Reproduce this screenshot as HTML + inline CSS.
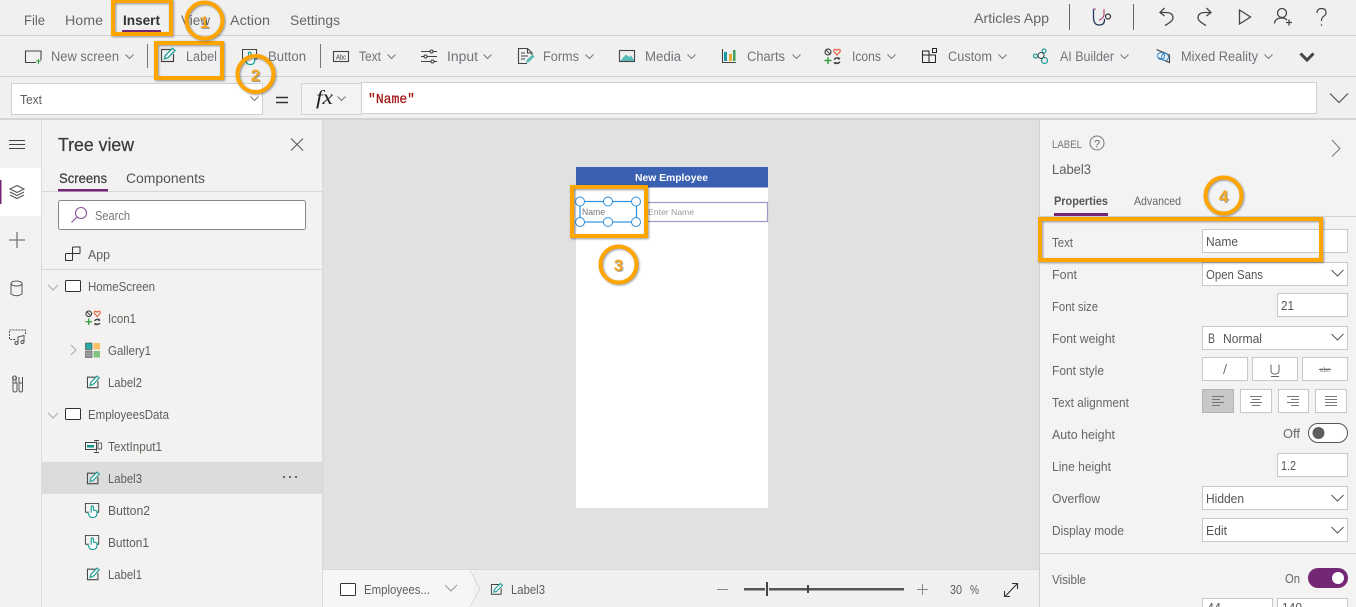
<!DOCTYPE html>
<html><head><meta charset="utf-8"><title>Articles App</title>
<style>
html,body{margin:0;padding:0;background:#f0f0f0;overflow:hidden}
svg{display:block}
text{font-family:"Liberation Sans",sans-serif;font-size:13px;fill:#666;}
.m{font-size:14px;fill:#666}
.t{font-size:13.5px;fill:#72727a}
.n{font-size:13px;fill:#605e5c}
.p{font-size:12.5px;fill:#666}
.v{font-size:12.5px;fill:#555}
.o{fill:none;stroke:#ffa500;stroke-width:4;filter:drop-shadow(1px 1px 1px rgba(0,0,0,.4))}
.num{font-size:17px;font-weight:bold;fill:#f5a623;text-anchor:middle;filter:drop-shadow(1px 1px 0 rgba(0,0,0,.35))}
.i{fill:none;stroke:#444;stroke-width:1.1}
.c{fill:none;stroke:#777;stroke-width:1}
.f{fill:#fff;stroke:#c8c8c8;stroke-width:1}
</style></head>
<body>
<svg width="1356" height="607" viewBox="0 0 1356 607" xmlns="http://www.w3.org/2000/svg">
<defs>
<symbol id="chev" viewBox="0 0 9 5" overflow="visible"><path d="M0.5 .5L4.5 4.5L8.500 .5" fill="none" stroke="#777" stroke-width="1"/></symbol>
<symbol id="label" viewBox="0 0 16 16" overflow="visible">
<path d="M11 2.500H.5V14.500H12.500V7" fill="none" stroke="#444" stroke-width="1.200"/>
<path d="M3.500 11.800L4.300 8.500L11.500 1.300L14 3.500L6.800 10.900Z" fill="#fff" stroke="#2aa198" stroke-width="1.400"/>
</symbol>
<symbol id="btn" viewBox="0 0 17 17" overflow="visible">
<path d="M4.500 10.500H.5V.5H15.500V10.500H14" fill="none" stroke="#444" stroke-width="1.100"/>
<path d="M7 11V4Q8 2.500 9.500 4V8L13.500 9V12.500Q13 16.500 8.500 16.500Q5.500 16.500 4.500 13.500L3 10.500" fill="#fff" stroke="#14a098" stroke-width="1.300"/>
</symbol>
<symbol id="icons" viewBox="0 0 17 17" overflow="visible">
<circle cx="4" cy="4" r="3" fill="none" stroke="#444" stroke-width="1.200"/><path d="M2 2L6 6" stroke="#444"/>
<path d="M13 7L9.800 3.500Q9.500 1.200 11.500 1.300L13 2.300L14.500 1.300Q16.500 1.200 16.200 3.500Z" fill="none" stroke="#e8603c" stroke-width="1.200"/>
<path d="M.5 12.500H7.500M4 9V16" stroke="#2e9e3b" stroke-width="1.400"/>
<path d="M10 11.500Q13 8.500 16 11M16 14Q13 16.500 10 14.500" fill="none" stroke="#444" stroke-width="1.500"/>
<path d="M15 9L16 11.500L13.500 11.500M11 16.500L10 14L12.500 14" fill="#444"/>
</symbol>
<symbol id="scr" viewBox="0 0 16 12" overflow="visible"><rect x=".5" y=".5" width="15" height="11" rx="1" fill="#fff" stroke="#333" stroke-width="1"/></symbol>
</defs>

<rect width="1356" height="607" fill="#f0f0f0"/>
<path d="M0 35.500H1356M0 76.500H1356" stroke="#d2d2d2" stroke-width="1"/>
<rect y="118" width="1356" height="2" fill="#d4d4d4"/>

<!-- menu -->
<text class="m" x="24" y="25" textLength="21" lengthAdjust="spacingAndGlyphs">File</text>
<text class="m" x="65" y="25" textLength="38" lengthAdjust="spacingAndGlyphs">Home</text>
<text class="m" x="123" y="25" textLength="37" lengthAdjust="spacingAndGlyphs" style="font-weight:bold;fill:#333">Insert</text>
<rect x="122" y="30" width="39" height="2" fill="#742774"/>
<text class="m" x="181" y="25" textLength="29" lengthAdjust="spacingAndGlyphs">View</text>
<text class="m" x="230" y="25" textLength="40" lengthAdjust="spacingAndGlyphs">Action</text>
<text class="m" x="290" y="25" textLength="50" lengthAdjust="spacingAndGlyphs">Settings</text>

<text class="m" x="974" y="23" textLength="75" lengthAdjust="spacingAndGlyphs">Articles App</text>
<path d="M1069.500 4V30M1133.500 4V30" stroke="#666" stroke-width="1"/>
<!-- stethoscope -->
<path d="M1093.500 9V17Q1093.500 25 1099 25Q1104.500 25 1104.500 20V19" fill="none" stroke="#243a5e" stroke-width="1.300"/>
<path d="M1093.500 9H1096M1104 9V15Q1103 19 1099 20" fill="none" stroke="#b03a6a" stroke-width="1.100"/>
<circle cx="1108" cy="16.500" r="2.500" fill="none" stroke="#333" stroke-width="1.200"/>
<!-- undo/redo/play/user/help -->
<path d="M1160 12.500H1166Q1173 12.500 1173 18Q1173 21 1165 25.500M1164.500 8L1160 12.500L1164.500 16" class="i" style="stroke-width:1.300"/>
<path d="M1211 12.500H1205Q1198 12.500 1198 18Q1198 21 1206 25.500M1206.500 8L1211 12.500L1206.500 16" class="i" style="stroke-width:1.300"/>
<path d="M1239.500 10V24L1250.500 17Z" class="i" style="stroke-width:1.300"/>
<circle cx="1282" cy="13" r="4.500" class="i" style="stroke-width:1.300"/>
<path d="M1274.500 23.500Q1275 18 1282 18Q1285 18 1287 20M1286 22.500H1292M1289 19.500V25.500" class="i" style="stroke-width:1.300"/>
<path d="M1317 13Q1317 8.500 1321.500 8.500Q1326 8.500 1326 12.500Q1326 15 1323.500 16.500Q1321.500 17.500 1321.500 21" class="i" style="stroke-width:1.200"/><circle cx="1321.500" cy="25" r=".8" fill="#444"/>

<!-- toolbar -->
<path d="M147.500 44V68M320.500 44V68" stroke="#777" stroke-width="1"/>
<path d="M36 62.500H25.500V51H41V60" class="i"/><path d="M36 61H41M38.500 59V64" stroke="#2e9e3b" stroke-width="1"/>
<text class="t" x="51" y="61" textLength="68" lengthAdjust="spacingAndGlyphs">New screen</text><use href="#chev" x="125" y="54" width="9" height="5"/>
<use href="#label" x="161" y="47" width="16" height="16"/>
<text class="t" x="186" y="61" textLength="31" lengthAdjust="spacingAndGlyphs">Label</text>
<use href="#btn" x="242" y="49" width="16" height="16"/>
<text class="t" x="268" y="61" textLength="38" lengthAdjust="spacingAndGlyphs">Button</text>
<rect x="333.500" y="51.500" width="15" height="10" class="i"/><text x="336" y="59.500" style="font-size:7px;fill:#444" textLength="10" lengthAdjust="spacingAndGlyphs">Abc</text>
<text class="t" x="359" y="61" textLength="22" lengthAdjust="spacingAndGlyphs">Text</text><use href="#chev" x="387" y="54" width="9" height="5"/>
<path d="M421 51.500H430M433 51.500H437M421 56.500H424M427 56.500H437M421 61.500H431M434 61.500H437" stroke="#444" stroke-width="1"/><circle cx="431.500" cy="51.500" r="1.500" class="i"/><circle cx="425.500" cy="56.500" r="1.500" class="i"/><circle cx="432.500" cy="61.500" r="1.500" class="i"/>
<text class="t" x="447" y="61" textLength="31" lengthAdjust="spacingAndGlyphs">Input</text><use href="#chev" x="483" y="54" width="9" height="5"/>
<path d="M527 63.500H518.500V48.500H527.500L532 53V55M527.500 48.500V53H532M521 53H525M521 56H528M521 59H525" class="i"/><path d="M526 63L527 59.500L532.500 54.500L534.500 56.500L529 62Z" fill="#5bbdb8"/>
<text class="t" x="543" y="61" textLength="36" lengthAdjust="spacingAndGlyphs">Forms</text><use href="#chev" x="585" y="54" width="9" height="5"/>
<rect x="619.500" y="50.500" width="15" height="11" class="i"/><path d="M620 61L626 54.500L629 57L631 55.500L634 60V61Z" fill="#55bcb8"/>
<text class="t" x="645" y="61" textLength="36" lengthAdjust="spacingAndGlyphs">Media</text><use href="#chev" x="687" y="54" width="9" height="5"/>
<path d="M722.500 49V62.500H736" class="i"/><rect x="724" y="52" width="3" height="9" fill="#1a9ba1"/><rect x="729" y="54" width="3" height="7" fill="#f0a830"/><rect x="733" y="50" width="2.500" height="11" fill="#3ea35a"/>
<text class="t" x="747" y="61" textLength="38" lengthAdjust="spacingAndGlyphs">Charts</text><use href="#chev" x="792" y="54" width="9" height="5"/>
<use href="#icons" x="824" y="48" width="17" height="17"/>
<text class="t" x="852" y="61" textLength="29" lengthAdjust="spacingAndGlyphs">Icons</text><use href="#chev" x="887" y="54" width="9" height="5"/>
<path d="M922.500 55H935.500V62.500H922.500ZM929 55V62.500M922.500 55V51H929V55" fill="none" stroke="#222" stroke-width="1"/><rect x="932.500" y="48.500" width="4" height="4" fill="none" stroke="#222"/>
<text class="t" x="948" y="61" textLength="44" lengthAdjust="spacingAndGlyphs">Custom</text><use href="#chev" x="998" y="54" width="9" height="5"/>
<circle cx="1035.500" cy="56" r="2" fill="none" stroke="#1a9b94" stroke-width="1.200"/><circle cx="1044" cy="51" r="2" fill="none" stroke="#1a9b94" stroke-width="1.200"/><circle cx="1044.500" cy="60.500" r="3" fill="none" stroke="#1a9b94" stroke-width="1.200"/><circle cx="1041" cy="55.500" r="3" fill="none" stroke="#444" stroke-width="1"/>
<text class="t" x="1060" y="61" textLength="54" lengthAdjust="spacingAndGlyphs">AI Builder</text><use href="#chev" x="1120" y="54" width="9" height="5"/>
<path d="M1156.500 49.500L1169.500 55V62.500L1158.500 58" class="i"/><circle cx="1161" cy="56" r="3.500" fill="none" stroke="#2f8fd8"/><circle cx="1165" cy="57" r="3.500" fill="none" stroke="#2f8fd8"/>
<text class="t" x="1181" y="61" textLength="77" lengthAdjust="spacingAndGlyphs">Mixed Reality</text><use href="#chev" x="1264" y="54" width="9" height="5"/>
<path d="M1300.500 53.500L1307 60L1313.500 53.500" fill="none" stroke="#444" stroke-width="3"/>

<!-- formula bar -->
<rect x="11.500" y="83.500" width="251" height="31" fill="#fff" stroke="#d0d0d0"/>
<text class="n" x="20" y="104" textLength="22" lengthAdjust="spacingAndGlyphs">Text</text>
<use href="#chev" x="250" y="96" width="9" height="5"/>
<path d="M276 97.500H288M276 102.500H288" stroke="#333" stroke-width="1.600"/>
<rect x="301.500" y="83.500" width="60" height="31" fill="#f3f3f3" stroke="#d4d4d4"/>
<text x="316" y="104" style="font-family:'Liberation Serif',serif;font-style:italic;font-size:20px;fill:#222" textLength="17" lengthAdjust="spacingAndGlyphs">fx</text>
<use href="#chev" x="337" y="96" width="9" height="5"/>
<rect x="361.500" y="82.500" width="955" height="31" fill="#fff" stroke="#d0d0d0"/>
<text x="368" y="103" style="font-family:'Liberation Mono',monospace;font-size:14px;fill:#a31515;stroke:#a31515;stroke-width:.25" textLength="47" lengthAdjust="spacingAndGlyphs">"Name"</text>
<path d="M1330 93.500L1339 102.500L1348 93.500" fill="none" stroke="#555" stroke-width="1.200"/>

<!-- left rail -->
<rect x="0" y="120" width="322" height="487" fill="#f3f2f1"/>
<rect x="41" y="120" width="1" height="487" fill="#dcdcdc"/>
<rect x="0" y="168" width="41" height="48" fill="#fff"/>
<rect x="0" y="180" width="1.500" height="24" fill="#742774"/>
<path d="M9 140.500H25M9 144.500H25M9 148.500H25" stroke="#444" stroke-width="1"/>
<path d="M17 185.500L24 189L17 192.500L10 189ZM10 192L17 195.500L24 192M10 195L17 198.500L24 195" fill="none" stroke="#555" stroke-width="1.100"/>
<path d="M9 240H25M17 232V248" stroke="#777" stroke-width="1.300"/>
<ellipse cx="16.500" cy="283.500" rx="5.500" ry="2.500" fill="none" stroke="#555"/><path d="M11 283.500V294Q16.500 297.500 22 294V283.500" fill="none" stroke="#555"/>
<path d="M15 339.500H9.500V330H25.500V335" fill="none" stroke="#555" stroke-dasharray="2 1"/><path d="M18 343V337L24 335.500V342" fill="none" stroke="#555"/><circle cx="16.500" cy="343" r="1.500" fill="none" stroke="#555"/><circle cx="22.500" cy="342" r="1.500" fill="none" stroke="#555"/>
<path d="M13 377V390Q13 392 15 392Q17 392 17 390V383H12.500M16 377V383M19 377V390Q19 392 21 392Q22.500 392 22.500 390V377M19 383H22.500" fill="none" stroke="#555" stroke-width="1"/><circle cx="14.500" cy="378" r="2" fill="none" stroke="#555"/>

<!-- tree panel -->
<rect x="322" y="120" width="1" height="487" fill="#d8d8d8"/>
<text x="58" y="151" style="font-size:18px;fill:#3b3a39;stroke:#3b3a39;stroke-width:.25" textLength="76" lengthAdjust="spacingAndGlyphs">Tree view</text>
<path d="M291 138.500L303 150.500M303 138.500L291 150.500" stroke="#555" stroke-width="1"/>
<text x="59" y="183" style="font-size:14px;fill:#3b3a39;stroke:#3b3a39;stroke-width:.2" textLength="48" lengthAdjust="spacingAndGlyphs">Screens</text>
<text x="126" y="183" style="font-size:14px;fill:#555" textLength="79" lengthAdjust="spacingAndGlyphs">Components</text>
<rect x="42" y="191" width="280" height="1" fill="#d8d8d8"/>
<rect x="58" y="189" width="50" height="2.500" fill="#742774"/>
<rect x="58.500" y="200.500" width="247" height="29" rx="2" fill="#fff" stroke="#8a8886"/>
<circle cx="81" cy="213" r="5.500" fill="none" stroke="#8f4e9c" stroke-width="1.100"/><path d="M77 217L71.500 222.500" stroke="#8f4e9c" stroke-width="1.100"/>
<text class="n" x="95" y="220" textLength="35" lengthAdjust="spacingAndGlyphs" style="fill:#777">Search</text>
<path d="M65.500 253.500H80M72.500 247V260.500M65.500 253.500V260.500H72.500M72.500 247H80V253.500" fill="none" stroke="#333"/>
<text class="n" x="88" y="259" textLength="22" lengthAdjust="spacingAndGlyphs">App</text>
<rect x="42" y="269" width="280" height="1" fill="#d8d8d8"/>

<path d="M48 285L53 290L58 285" fill="none" stroke="#aaa"/>
<use href="#scr" x="65" y="280" width="16" height="12"/>
<text class="n" x="88" y="291" textLength="67" lengthAdjust="spacingAndGlyphs">HomeScreen</text>
<use href="#icons" x="85" y="310" width="16" height="16"/>
<text class="n" x="108" y="323" textLength="28" lengthAdjust="spacingAndGlyphs">Icon1</text>
<path d="M71 345L76 350L71 355" fill="none" stroke="#aaa"/>
<rect x="85.500" y="343" width="6.500" height="6.500" fill="#2aa9a5" stroke="#444" stroke-width=".6"/><rect x="93.500" y="343" width="6.500" height="6.500" fill="#f7c064"/><rect x="85.500" y="351" width="6.500" height="6.500" fill="#999" stroke="#555" stroke-width=".6"/><rect x="93.500" y="351" width="6.500" height="6.500" fill="#7fc37f"/>
<text class="n" x="108" y="355" textLength="43" lengthAdjust="spacingAndGlyphs">Gallery1</text>
<use href="#label" x="87" y="375" width="14" height="14"/>
<text class="n" x="108" y="387" textLength="34" lengthAdjust="spacingAndGlyphs">Label2</text>
<path d="M48 413L53 418L58 413" fill="none" stroke="#aaa"/>
<use href="#scr" x="65" y="408" width="16" height="12"/>
<text class="n" x="88" y="419" textLength="81" lengthAdjust="spacingAndGlyphs">EmployeesData</text>
<rect x="85.500" y="442.500" width="11" height="7" fill="none" stroke="#444"/><rect x="87" y="445" width="7" height="2.500" fill="#0f9488"/>
<path d="M96.500 441.500V451.500M94 440.500H99M94 452.500H99" fill="none" stroke="#444" stroke-width=".9"/><rect x="98" y="443" width="3.500" height="6" fill="none" stroke="#444" stroke-width=".8"/>
<text class="n" x="108" y="451" textLength="54" lengthAdjust="spacingAndGlyphs">TextInput1</text>
<rect x="42" y="462" width="280" height="32" fill="#dcdcdc"/>
<use href="#label" x="87" y="471" width="14" height="14"/>
<text class="n" x="108" y="483" textLength="34" lengthAdjust="spacingAndGlyphs">Label3</text>
<circle cx="284" cy="477" r="1" fill="#444"/><circle cx="290" cy="477" r="1" fill="#444"/><circle cx="296" cy="477" r="1" fill="#444"/>
<use href="#btn" x="85" y="503" width="15" height="15"/>
<text class="n" x="108" y="515" textLength="42" lengthAdjust="spacingAndGlyphs">Button2</text>
<use href="#btn" x="85" y="535" width="15" height="15"/>
<text class="n" x="108" y="547" textLength="41" lengthAdjust="spacingAndGlyphs">Button1</text>
<use href="#label" x="87" y="567" width="14" height="14"/>
<text class="n" x="108" y="579" textLength="34" lengthAdjust="spacingAndGlyphs">Label1</text>

<!-- canvas -->
<rect x="323" y="120" width="716" height="450" fill="#e1e1e1"/>
<rect x="576" y="167" width="192" height="341" fill="#fff"/>
<rect x="576" y="167" width="192" height="20.500" fill="#3a60b2"/>
<text x="635" y="181" style="font-size:10px;font-weight:bold;fill:#fff" textLength="73" lengthAdjust="spacingAndGlyphs">New Employee</text>
<rect x="645.500" y="202.500" width="122" height="19" fill="#fff" stroke="#9c9cc4" stroke-width="1.200"/>
<text x="648" y="215" style="font-size:8.500px;fill:#999" textLength="46" lengthAdjust="spacingAndGlyphs">Enter Name</text>
<text x="582" y="215" style="font-size:9.500px;fill:#777" textLength="23" lengthAdjust="spacingAndGlyphs">Name</text>
<rect x="580" y="201.500" width="56.500" height="20.500" fill="none" stroke="#2f8fd8" stroke-width="1.200"/>
<g fill="#fff" stroke="#2f8fd8" stroke-width="1"><circle cx="580" cy="201.500" r="4.500"/><circle cx="608" cy="201.500" r="4.500"/><circle cx="636" cy="201.500" r="4.500"/><circle cx="580" cy="222" r="4.500"/><circle cx="608" cy="222" r="4.500"/><circle cx="636" cy="222" r="4.500"/></g>

<!-- status bar -->
<rect x="323" y="569" width="716" height="38" fill="#f0f0f0"/>
<rect x="323" y="570" width="150" height="37" fill="#f6f6f6"/>
<rect x="323" y="569" width="716" height="1" fill="#d8d8d8"/>
<rect x="340.500" y="583.500" width="15" height="12" rx="1" fill="#fff" stroke="#333"/>
<text class="n" x="364" y="594" textLength="66" lengthAdjust="spacingAndGlyphs">Employees...</text>
<path d="M445 585L451 591L457 585" fill="none" stroke="#999"/>
<path d="M470 570L480 589L470 607" fill="none" stroke="#d8d8d8"/>
<use href="#label" x="491" y="582" width="13" height="14"/>
<text class="n" x="511" y="594" textLength="34" lengthAdjust="spacingAndGlyphs">Label3</text>
<path d="M717 589.500H728M917 589.500H928M922.500 584V595" stroke="#888" stroke-width="1"/>
<rect x="744" y="588" width="160" height="2.500" fill="#555"/>
<rect x="765" y="581" width="4" height="16" fill="#f0f0f0"/><rect x="766" y="582" width="2" height="14" fill="#444"/>
<rect x="807" y="585" width="2" height="8" fill="#444"/>
<text class="n" x="950" y="594" textLength="12" lengthAdjust="spacingAndGlyphs">30</text>
<text class="n" x="970" y="594" textLength="9" lengthAdjust="spacingAndGlyphs">%</text>
<path d="M1005 596.500L1017 584M1012 583.500H1017.500V589M1004.500 591V596.500H1010" fill="none" stroke="#333" stroke-width="1.100"/>

<!-- right panel -->
<rect x="1039" y="120" width="317" height="487" fill="#f3f3f3"/>
<rect x="1039" y="120" width="1" height="487" fill="#cfcfcf"/>
<text x="1052" y="148" style="font-size:11px;fill:#777" textLength="30" lengthAdjust="spacingAndGlyphs">LABEL</text>
<circle cx="1097" cy="143" r="7" fill="none" stroke="#777"/>
<text x="1094" y="147.500" style="font-size:11px;fill:#666">?</text>
<text class="n" x="1052" y="174" textLength="39" lengthAdjust="spacingAndGlyphs" style="font-size:14px">Label3</text>
<path d="M1332 140L1340 148.500L1332 156.500" fill="none" stroke="#777" stroke-width="1"/>
<text x="1054" y="205" style="font-size:12px;font-weight:bold;fill:#555" textLength="54" lengthAdjust="spacingAndGlyphs">Properties</text>
<text x="1134" y="205" style="font-size:12px;fill:#666" textLength="47" lengthAdjust="spacingAndGlyphs">Advanced</text>
<rect x="1040" y="216" width="316" height="1" fill="#d4d4d4"/>
<rect x="1054" y="213" width="54" height="3" fill="#742774"/>

<text class="p" x="1052" y="247" textLength="21" lengthAdjust="spacingAndGlyphs">Text</text>
<text class="p" x="1052" y="279" textLength="25" lengthAdjust="spacingAndGlyphs">Font</text>
<text class="p" x="1052" y="311" textLength="46" lengthAdjust="spacingAndGlyphs">Font size</text>
<text class="p" x="1052" y="343" textLength="63" lengthAdjust="spacingAndGlyphs">Font weight</text>
<text class="p" x="1052" y="375" textLength="52" lengthAdjust="spacingAndGlyphs">Font style</text>
<text class="p" x="1052" y="407" textLength="77" lengthAdjust="spacingAndGlyphs">Text alignment</text>
<text class="p" x="1052" y="439" textLength="63" lengthAdjust="spacingAndGlyphs">Auto height</text>
<text class="p" x="1052" y="471" textLength="59" lengthAdjust="spacingAndGlyphs">Line height</text>
<text class="p" x="1052" y="503" textLength="48" lengthAdjust="spacingAndGlyphs">Overflow</text>
<text class="p" x="1052" y="535" textLength="72" lengthAdjust="spacingAndGlyphs">Display mode</text>
<text class="p" x="1052" y="584" textLength="34" lengthAdjust="spacingAndGlyphs">Visible</text>

<rect class="f" x="1202.500" y="229.500" width="145" height="23"/>
<text class="v" x="1206" y="246" textLength="32" lengthAdjust="spacingAndGlyphs">Name</text>
<rect class="f" x="1202.500" y="262.500" width="145" height="23"/>
<text class="v" x="1206" y="279" textLength="57" lengthAdjust="spacingAndGlyphs">Open Sans</text>
<path d="M1331.500 270L1337.500 276L1343.500 270" fill="none" stroke="#555"/>
<rect class="f" x="1277.500" y="293.500" width="70" height="23"/>
<text class="v" x="1281" y="310" textLength="13" lengthAdjust="spacingAndGlyphs">21</text>
<rect class="f" x="1202.500" y="326.500" width="145" height="23"/>
<text class="v" x="1208" y="343" textLength="7" lengthAdjust="spacingAndGlyphs" style="font-size:14px">B</text>
<text class="v" x="1223" y="343" textLength="39" lengthAdjust="spacingAndGlyphs">Normal</text>
<path d="M1331.500 334L1337.500 340L1343.500 334" fill="none" stroke="#555"/>

<rect class="f" x="1202.500" y="357.500" width="45" height="23"/>
<rect class="f" x="1252.500" y="357.500" width="45" height="23"/>
<rect class="f" x="1302.500" y="357.500" width="45" height="23"/>
<path d="M1226.500 364L1223.500 374" stroke="#666"/>
<path d="M1271 364.500V371Q1271 374 1275 374Q1279 374 1279 371V364.500M1271 376.500H1279" fill="none" stroke="#666"/>
<path d="M1319 369.500H1331" stroke="#666"/><text x="1320" y="372" style="font-size:7px;fill:#888" textLength="10" lengthAdjust="spacingAndGlyphs">abc</text>

<rect x="1202.500" y="389.500" width="31" height="23" fill="#c8c8c8" stroke="#b4b4b4"/>
<rect class="f" x="1240.500" y="389.500" width="31" height="23"/>
<rect class="f" x="1278.500" y="389.500" width="30" height="23"/>
<rect class="f" x="1315.500" y="389.500" width="31" height="23"/>
<path d="M1212 396.500H1224M1212 399.500H1220M1212 402.500H1224M1212 405.500H1220" stroke="#777"/>
<path d="M1250 396.500H1262M1252 399.500H1260M1250 402.500H1262M1252 405.500H1260" stroke="#777"/>
<path d="M1287 396.500H1299M1291 399.500H1299M1287 402.500H1299M1291 405.500H1299" stroke="#777"/>
<path d="M1325 396.500H1337M1325 399.500H1337M1325 402.500H1337M1325 405.500H1337" stroke="#777"/>

<text class="p" x="1283" y="438" textLength="17" lengthAdjust="spacingAndGlyphs">Off</text>
<rect x="1308.500" y="423.500" width="39" height="19" rx="9.500" fill="#fff" stroke="#555"/>
<circle cx="1318.500" cy="433" r="6" fill="#605e5c"/>
<rect class="f" x="1277.500" y="453.500" width="70" height="23"/>
<text class="v" x="1281" y="470" textLength="15" lengthAdjust="spacingAndGlyphs">1.2</text>
<rect class="f" x="1202.500" y="486.500" width="145" height="23"/>
<text class="v" x="1206" y="503" textLength="38" lengthAdjust="spacingAndGlyphs">Hidden</text>
<path d="M1331.500 495L1337.500 501L1343.500 495" fill="none" stroke="#555"/>
<rect class="f" x="1202.500" y="518.500" width="145" height="23"/>
<text class="v" x="1206" y="535" textLength="21" lengthAdjust="spacingAndGlyphs">Edit</text>
<path d="M1331.500 527L1337.500 533L1343.500 527" fill="none" stroke="#555"/>
<rect x="1040" y="553" width="316" height="1" fill="#d4d4d4"/>
<text class="p" x="1285" y="583" textLength="15" lengthAdjust="spacingAndGlyphs">On</text>
<rect x="1308" y="568" width="40" height="20" rx="10" fill="#742774"/>
<circle cx="1338" cy="578" r="6" fill="#fff"/>
<rect class="f" x="1202.500" y="598.500" width="70" height="20"/>
<rect class="f" x="1277.500" y="598.500" width="70" height="20"/>
<text class="v" x="1207" y="612" textLength="14" lengthAdjust="spacingAndGlyphs">44</text>
<text class="v" x="1282" y="612" textLength="20" lengthAdjust="spacingAndGlyphs">140</text>

<!-- orange annotations -->
<rect class="o" x="113" y="1" width="58" height="33"/>
<rect class="o" x="156" y="43" width="66" height="35"/>
<rect class="o" x="572" y="187" width="74" height="49"/>
<rect class="o" x="1040" y="219" width="281" height="41"/>
<circle class="o" cx="204.500" cy="20.500" r="18"/>
<text class="num" x="204.500" y="28">1</text>
<circle class="o" cx="255.500" cy="74" r="18"/>
<text class="num" x="255.500" y="81">2</text>
<circle class="o" cx="618.500" cy="264.500" r="18"/>
<text class="num" x="618.500" y="271">3</text>
<circle class="o" cx="1223.500" cy="195.500" r="18"/>
<text class="num" x="1223.500" y="202">4</text>
</svg>
</body></html>
